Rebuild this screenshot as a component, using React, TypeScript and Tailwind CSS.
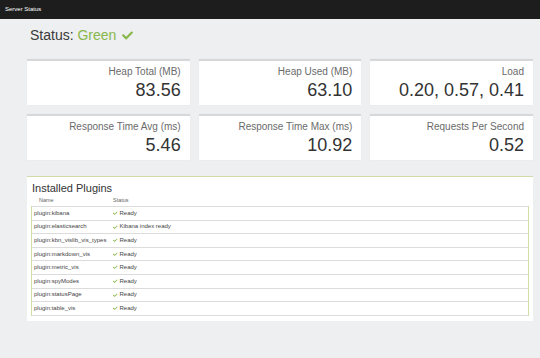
import { FaCheck } from 'react-icons/fa';

const metrics = [
  { label: 'Heap Total (MB)', value: '83.56' },
  { label: 'Heap Used (MB)', value: '63.10' },
  { label: 'Load', value: '0.20, 0.57, 0.41' },
  { label: 'Response Time Avg (ms)', value: '5.46' },
  { label: 'Response Time Max (ms)', value: '10.92' },
  { label: 'Requests Per Second', value: '0.52' },
];

const plugins = [
  { name: 'plugin:kibana', status: 'Ready' },
  { name: 'plugin:elasticsearch', status: 'Kibana index ready' },
  { name: 'plugin:kbn_vislib_vis_types', status: 'Ready' },
  { name: 'plugin:markdown_vis', status: 'Ready' },
  { name: 'plugin:metric_vis', status: 'Ready' },
  { name: 'plugin:spyModes', status: 'Ready' },
  { name: 'plugin:statusPage', status: 'Ready' },
  { name: 'plugin:table_vis', status: 'Ready' },
];

function MetricCard({ label, value }: { label: string; value: string }) {
  return (
    <div className="flex h-[46px] flex-col items-end border-t-2 border-[#d6d8d9] bg-white pt-[5px] pr-[9px] shadow-[0_0_2px_rgba(0,0,0,0.04)]">
      <div className="text-[10px] leading-[12px] text-[#6a6a6a]">{label}</div>
      <div className="mt-[2px] text-[18px] leading-[20px] text-[#333]">{value}</div>
    </div>
  );
}

export default function App() {
  return (
    <div className="min-h-[358px] bg-[#edeff0] font-['Liberation_Sans',Arial,sans-serif]">
      {/* Top bar */}
      <div className="flex h-[19px] items-center bg-[#1d1d1d] px-[5px] text-[6px] text-white">
        Server Status
      </div>

      <div className="pl-[27px] pr-[7px]">
        <h1 className="flex items-center pt-[8px] pl-[3px] text-[14px] leading-[16px] text-[#3a3a3a]">
          Status:&nbsp;<span className="text-[#8ab74c]">Green</span>
          <FaCheck className="ml-[6px] text-[#8ab74c]" size={11} />
        </h1>

        {/* Metrics */}
        <div className="mt-[16px] grid grid-cols-3 gap-[9px]">
          {metrics.map((m) => (
            <MetricCard key={m.label} label={m.label} value={m.value} />
          ))}
        </div>

        {/* Plugins */}
        <div className="mt-[16px] border-t border-[#cfdca8] bg-white px-[4px] pb-[5px]">
          <div className="pt-[5px] pl-[1px] text-[11px] leading-[13px] text-[#333]">Installed Plugins</div>
          <div className="flex h-[11px] items-center text-[5.5px] text-[#666]">
            <div className="w-[82px] pl-[8px]">Name</div>
            <div>Status</div>
          </div>
          <div className="border-x-[1.5px] border-b border-x-[#d2dea6] border-b-[#dcdcdc]">
            {plugins.map((p) => (
              <div
                key={p.name}
                className="flex h-[13.6px] items-center border-t border-[#dcdcdc] text-[6px] text-[#444]"
              >
                <div className="w-[81px] pl-[2px]">{p.name}</div>
                <div className="flex items-center">
                  <FaCheck className="mr-[2px] text-[#8ab74c]" size={4.5} />
                  {p.status}
                </div>
              </div>
            ))}
          </div>
        </div>
      </div>
    </div>
  );
}
